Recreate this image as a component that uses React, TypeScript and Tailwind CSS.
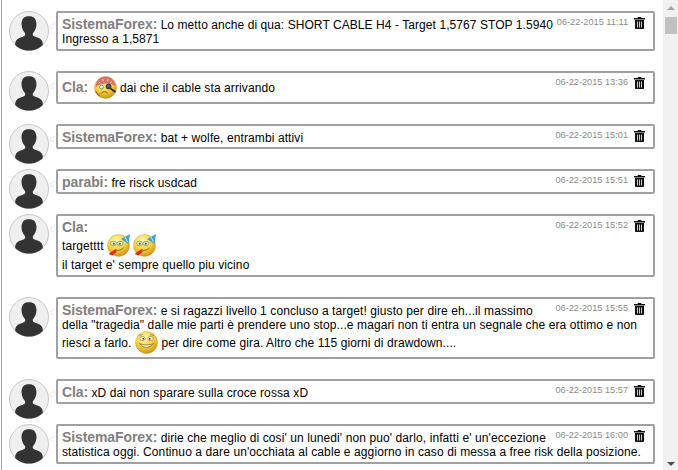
import type { ReactNode } from 'react';

type Emoji = 'sick' | 'party' | 'smile';

function Avatar() {
  return (
    <svg width="47" height="41" viewBox="0 0 47 41" className="shrink-0">
      <path d="M40.5 15 L46 12 M41 17 L45 17" stroke="#e8e8e8" strokeWidth="1" fill="none" />
      <circle cx="20" cy="20" r="19.5" fill="#efefef" stroke="#c8c8c8" />
      <path
        d="M20 5c-5 0-7.500 3.600-7.500 8 0 3.600 1.500 7 3.400 9 .6.8.5 2.200-.5 2.900-1.600 1-6 1.800-7.800 4-1 1.200-1.600 3-1.400 5 3.200 3.300 8.500 5.600 13.800 5.600s10.600-2.300 13.800-5.600c.2-2-.4-3.800-1.400-5-1.800-2.200-6.200-3-7.800-4-1-.7-1.100-2.100-.5-2.900 1.900-2 3.400-5.400 3.400-9 0-4.400-2.500-8-7.500-8z"
        fill="#333"
      />
    </svg>
  );
}

function Smiley({ kind }: { kind: Emoji }) {
  return (
    <svg width="23" height="23" viewBox="0 0 23 23" className="inline-block align-[-8px] -mt-[1px] mb-[1px]">
      <defs>
        <radialGradient id={`face-${kind}`} cx="42%" cy="28%" r="78%">
          <stop offset="0%" stopColor="#fff8b8" />
          <stop offset="55%" stopColor="#f9cf38" />
          <stop offset="100%" stopColor="#c4860e" />
        </radialGradient>
      </defs>
      <circle cx="11.500" cy="11.500" r="11" fill={`url(#face-${kind})`} stroke="#b8923a" strokeWidth="0.400" />
      {kind === 'smile' && (
        <>
          <ellipse cx="7.500" cy="7.500" rx="2.700" ry="2" fill="#fff" stroke="#7a6a20" strokeWidth="0.600" />
          <ellipse cx="15.500" cy="7.500" rx="2.700" ry="2" fill="#fff" stroke="#7a6a20" strokeWidth="0.600" />
          <circle cx="8.300" cy="7.800" r="0.900" fill="#333" />
          <circle cx="14.800" cy="7.800" r="0.900" fill="#333" />
          <path d="M4 4.500l4-1M19 4.500l-4-1" stroke="#8a6a18" strokeWidth="0.700" />
          <path d="M4.500 12.500c2.500 5 11.500 5 14 0-3.500 2-10.500 2-14 0z" fill="#fff" stroke="#6b5a18" strokeWidth="0.700" />
        </>
      )}
      {kind === 'party' && (
        <>
          <path d="M14 5L23 0l-1.500 10z" fill="#3f9fd8" />
          <path d="M18 3l2.500 5" stroke="#d8eef8" strokeWidth="1" />
          <ellipse cx="6.500" cy="9.500" rx="3" ry="2.200" fill="#dff0c8" stroke="#7a7a30" strokeWidth="0.600" />
          <ellipse cx="13" cy="9.500" rx="3" ry="2.200" fill="#dff0c8" stroke="#7a7a30" strokeWidth="0.600" />
          <circle cx="6.800" cy="9.800" r="1" fill="#556" />
          <circle cx="12.800" cy="9.800" r="1" fill="#556" />
          <path d="M1.500 20l6.500-4.500 2 1.800-4.500 4.200z" fill="#d9281e" />
          <path d="M8 15.500c2.500 1.500 6 1 8.500-1.500" stroke="#7a5210" strokeWidth="0.800" fill="none" />
        </>
      )}
      {kind === 'sick' && (
        <>
          <path d="M1.500 11c.5-6.500 5-10.500 10-10.500s9.500 4 10 9.500c-5-3.500-14-3.500-20 1z" fill="#d9706a" />
          <path d="M4.500 6l2 1.200M8.500 3l1 2.200M14 3l-.5 2.200M18 5.500l-2 1.500" stroke="#f4d8d0" strokeWidth="1" />
          <circle cx="7.500" cy="11" r="2" fill="#e8f0d0" stroke="#5a5a20" strokeWidth="0.600" />
          <circle cx="14.500" cy="10.500" r="2.500" fill="#555" stroke="#222" strokeWidth="0.800" />
          <path d="M16.500 12.500l5 3.500" stroke="#222" strokeWidth="1.700" />
          <path d="M7 17.500c1.500-2.300 5.500-2.300 7 0" stroke="#6b4a10" strokeWidth="1" fill="none" />
          <path d="M1.500 15c1 2.500 2.200 4 4.500 5" stroke="#a0741c" strokeWidth="1.200" fill="none" />
        </>
      )}
    </svg>
  );
}

function Trash() {
  return (
    <svg width="11" height="12" viewBox="0 0 11 12" className="block">
      <path d="M4 0h3l.5 1H11v1.500H0V1h3.500z" fill="#111" />
      <path d="M1 3h9v8c0 .6-.4 1-1 1H2c-.6 0-1-.4-1-1z" fill="#111" />
      <path d="M3.500 4.500v6M5.500 4.500v6M7.500 4.500v6" stroke="#fff" strokeWidth="0.800" />
    </svg>
  );
}

function Message({ name, time, children }: { name: string; time: string; children: ReactNode }) {
  return (
    <div className="flex items-start">
      <div className="pl-[7px] pb-[4px] w-[54px] shrink-0">
        <Avatar />
      </div>
      <div className="flex-1 mb-[20px] border-[2px] border-[#a0a0a0] rounded-[2px] bg-white pl-[4px] pr-[8px] pt-[4px] pb-[2px] text-[12px] leading-[14px] tracking-[0.1px] text-black">
        <div className="float-right flex items-start gap-[6px] h-[13px] tracking-normal">
          <span className="text-[9.200px] leading-[10px] text-[#8a8a8a]">{time}</span>
          <span><Trash /></span>
        </div>
        <span className="text-[14px] font-bold tracking-[-0.1px] text-[#808080]">{name}:</span> {children}
      </div>
    </div>
  );
}

export default function App() {
  return (
    <div className="flex h-[470px] w-[678px] overflow-hidden bg-white font-['Liberation_Sans',Arial,sans-serif]">
      <div className="w-[1px] ml-[1px] shrink-0 bg-[#a8a8a8]" />
      <div className="w-[653px] shrink-0 pt-[11px] overflow-hidden">
        <Message name="SistemaForex" time="06-22-2015 11:11">
          <span className="tracking-[0.07px]">Lo metto anche di qua: SHORT CABLE H4 - Target 1,5767 STOP 1.5940 Ingresso a 1,5871</span>
          <div className="h-[1px]" />
        </Message>
        <Message name="Cla" time="06-22-2015 13:36">
          <span className="ml-[2px]"><Smiley kind="sick" /></span> dai che il cable sta arrivando
        </Message>
        <Message name="SistemaForex" time="06-22-2015 15:01">
          bat + wolfe, entrambi attivi
        </Message>
        <Message name="parabi" time="06-22-2015 15:51">
          fre risck usdcad
        </Message>
        <Message name="Cla" time="06-22-2015 15:52">
          <div>
            targetttt <Smiley kind="party" /> <Smiley kind="party" />
          </div>
          <div className="pb-[1px]">il target e' sempre quello piu vicino</div>
        </Message>
        <Message name="SistemaForex" time="06-22-2015 15:55">
          e si ragazzi livello 1 concluso a target! giusto per dire eh...il massimo della "tragedia" dalle mie parti è prendere uno stop...e magari non ti entra un segnale che era ottimo e non riesci a farlo. <Smiley kind="smile" /> per dire come gira. Altro che 115 giorni di drawdown....
        </Message>
        <Message name="Cla" time="06-22-2015 15:57">
          xD dai non sparare sulla croce rossa xD
        </Message>
        <Message name="SistemaForex" time="06-22-2015 16:00">
          dirie che meglio di cosi' un lunedi' non puo' darlo, infatti e' un'eccezione statistica oggi. Continuo a dare un'occhiata al cable e aggiorno in caso di messa a free risk della posizione.
          <div className="h-[1px]" />
        </Message>
      </div>
      <div className="ml-[8px] w-[15px] shrink-0 bg-[#f1f1f1] flex flex-col items-center">
        <div className="mt-[6px] w-0 h-0 border-x-[4px] border-x-transparent border-b-[4px] border-b-[#a3a3a3]" />
        <div className="mt-[7px] w-[12px] h-[17px] bg-[#c1c1c1]" />
        <div className="mt-auto mb-[4px] w-0 h-0 border-x-[4px] border-x-transparent border-t-[4px] border-t-[#505050]" />
      </div>
    </div>
  );
}
